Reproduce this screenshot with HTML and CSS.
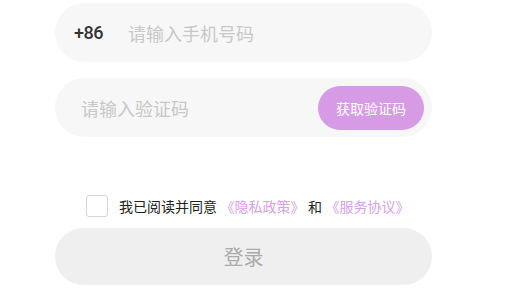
FILE: index.html
```html
<!DOCTYPE html>
<html lang="zh-CN">
<head>
<meta charset="utf-8">
<title>登录</title>
<link rel="stylesheet" href="styles.css">
</head>
<body>
<div class="form">
  <div class="field phone">
    <span class="prefix">+86</span>
    <span class="placeholder">请输入手机号码</span>
  </div>
  <div class="field code">
    <span class="placeholder">请输入验证码</span>
    <span class="get-code">获取验证码</span>
  </div>
  <div class="agree">
    <span class="checkbox"></span>
    <span class="agree-text">我已阅读并同意<span class="link">《隐私政策》</span>和<span class="link">《服务协议》</span></span>
  </div>
  <div class="login">登录</div>
</div>
</body>
</html>
```
FILE: styles.css
```css
html, body {
  margin: 0;
  padding: 0;
  background: #ffffff;
}
body {
  font-family: "Noto Sans CJK SC", "Noto Sans", sans-serif;
  width: 508px;
  height: 294px;
  overflow: hidden;
}
.form {
  width: 377px;
  margin-left: 55px;
  padding-top: 3px;
  display: flex;
  flex-direction: column;
}
.field {
  height: 59px;
  border-radius: 30px;
  background: #f7f7f7;
  display: flex;
  align-items: center;
  box-sizing: border-box;
}
.phone {
  padding-left: 19px;
}
.prefix {
  font-family: "Roboto", "Noto Sans", sans-serif;
  font-size: 18px;
  font-weight: 500;
  letter-spacing: -0.5px;
  color: #333333;
  width: 54px;
}
.placeholder {
  font-size: 18px;
  color: #c8c8c8;
  flex: 1;
}
.code {
  margin-top: 16px;
  padding-left: 26px;
  padding-right: 8px;
}
.get-code {
  width: 106px;
  height: 44px;
  border-radius: 22px;
  background: #d79be6;
  color: #ffffff;
  font-size: 14px;
  display: flex;
  align-items: center;
  justify-content: center;
}
.agree {
  margin-top: 58px;
  padding-left: 31px;
  display: flex;
  align-items: center;
  height: 22px;
}
.checkbox {
  width: 20px;
  height: 20px;
  border: 1px solid #d6d6d6;
  border-radius: 3px;
  margin-right: 11px;
  background: #ffffff;
}
.agree-text {
  font-size: 14px;
  color: #222222;
  white-space: nowrap;
}
.link {
  color: #d6a0e6;
  margin: 0 3.5px;
}
.login {
  margin-top: 11px;
  height: 57px;
  border-radius: 29px;
  background: #efefef;
  color: #ababab;
  font-size: 20px;
  display: flex;
  align-items: center;
  justify-content: center;
}
```
